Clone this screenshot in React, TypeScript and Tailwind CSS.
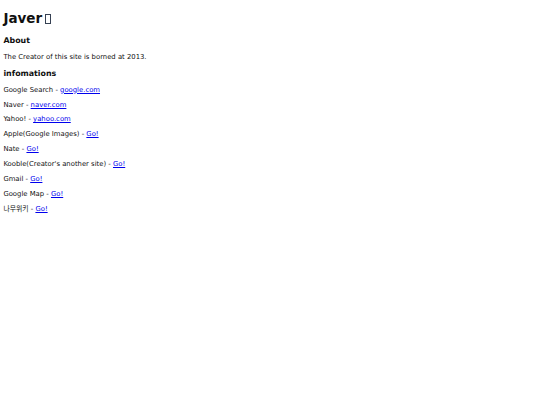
const links: { label: string; text: string }[] = [
  { label: "Google Search", text: "google.com" },
  { label: "Naver", text: "naver.com" },
  { label: "Yahoo!", text: "yahoo.com" },
  { label: "Apple(Google Images)", text: "Go!" },
  { label: "Nate", text: "Go!" },
  { label: "Kooble(Creator's another site)", text: "Go!" },
  { label: "Gmail", text: "Go!" },
  { label: "Google Map", text: "Go!" },
  { label: "나무위키", text: "Go!" },
];

export default function App() {
  return (
    <div className="min-h-screen bg-white px-[3.375px] text-[#111] font-['DejaVu_Sans','Noto_Sans_CJK_KR',sans-serif] text-[6.85px] leading-[8px] flow-root">
      <h1 className="mt-[10px] mb-[9px] text-[13.5px] leading-[17px] font-bold">
        Javer
        <span className="inline-block align-[-1px] ml-[3px] w-[6px] h-[10px] border-[1px] border-gray-700" />
      </h1>

      <h3 className="my-[7.9px] text-[7.9px] leading-[9px] font-bold">About</h3>
      <p className="my-[6.9px]">The Creator of this site is borned at 2013.</p>

      <h3 className="my-[7.9px] text-[7.9px] leading-[9px] font-bold">infomations</h3>
      {links.map((l) => (
        <p key={l.label} className="my-[6.9px]">
          {l.label} -{" "}
          <a href="#" className="text-[#0000ee] underline">
            {l.text}
          </a>
        </p>
      ))}
    </div>
  );
}
